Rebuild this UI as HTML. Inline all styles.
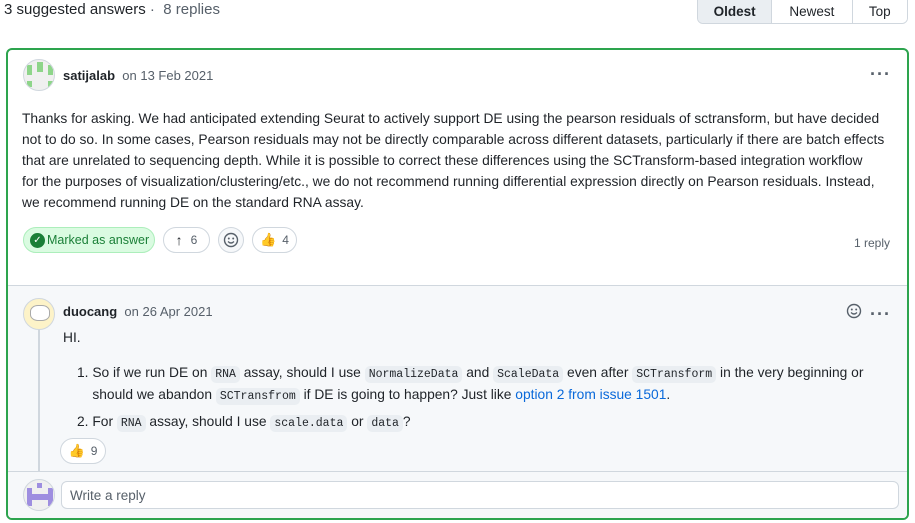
<!DOCTYPE html>
<html><head><meta charset="utf-8"><style>
*{box-sizing:border-box;margin:0;padding:0}
body{width:915px;height:523px;background:#fff;font-family:"Liberation Sans",sans-serif;color:#1f2328;font-size:13px;position:relative;overflow:hidden}
.abs{position:absolute;white-space:nowrap}
.seg{position:absolute;left:697px;top:-6px;height:30px;width:211px;border:1px solid #d0d7de;border-radius:6px;display:flex;overflow:hidden;background:#f6f8fa}
.seg div{display:flex;align-items:center;justify-content:center;border-left:1px solid #d0d7de;font-size:13.5px;padding-top:4px}
.card{position:absolute;left:6px;top:48px;width:903px;height:472px;border:2px solid #2da44e;border-radius:6px;overflow:hidden}
.av{position:absolute;border-radius:50%;border:1px solid #d0d7de;overflow:hidden}
.code{font-family:"Liberation Mono",monospace;font-size:11.5px;background:#eaeef2;border-radius:5px;padding:2px 4px}
.pill{position:absolute;height:26px;border:1px solid #d0d7de;border-radius:13px;display:flex;align-items:center;justify-content:center;font-size:12px;color:#57606a;background:#fff}
.body p{white-space:nowrap;line-height:21px;font-size:13.8px}
a{color:#0969da;text-decoration:none}
.dots{position:absolute;font-size:18px;letter-spacing:1px;color:#57606a;font-weight:bold}
</style></head><body>
<div class="abs" style="left:4px;top:1px;font-size:15px;">3 suggested answers <span style="color:#57606a">· &nbsp;8 replies</span></div>
<div class="seg"><div style="width:74px;border-left:0;background:#eaeef2;font-weight:bold">Oldest</div><div style="width:81px;background:#fff">Newest</div><div style="width:56px;background:#fff">Top</div></div>

<div class="card">
 <div class="av" style="left:15px;top:9px;width:32px;height:32px;background:#f0f0f0">
  <div style="position:absolute;left:13px;top:2px;width:6px;height:10px;background:#8ed58a"></div>
  <div style="position:absolute;left:3px;top:5px;width:5px;height:10px;background:#8ed58a"></div>
  <div style="position:absolute;left:24px;top:5px;width:5px;height:10px;background:#8ed58a"></div>
  <div style="position:absolute;left:3px;top:21px;width:5px;height:6px;background:#8ed58a"></div>
  <div style="position:absolute;left:24px;top:21px;width:5px;height:6px;background:#8ed58a"></div>
 </div>
 <div class="abs" style="left:55px;top:18px;font-size:13px"><b>satijalab</b> <span style="color:#57606a">&nbsp;on 13 Feb 2021</span></div>
 <div class="dots" style="left:862px;top:14px">···</div>
 <div class="abs body" style="left:14px;top:58px">
  <p>Thanks for asking. We had anticipated extending Seurat to actively support DE using the pearson residuals of sctransform, but have decided</p>
  <p>not to do so. In some cases, Pearson residuals may not be directly comparable across different datasets, particularly if there are batch effects</p>
  <p>that are unrelated to sequencing depth. While it is possible to correct these differences using the SCTransform-based integration workflow</p>
  <p>for the purposes of visualization/clustering/etc., we do not recommend running differential expression directly on Pearson residuals. Instead,</p>
  <p>we recommend running DE on the standard RNA assay.</p>
 </div>
 <div class="pill" style="left:15px;top:177px;width:132px;background:#dafbe1;border-color:#aceebb;color:#1a7f37;justify-content:flex-start;padding-left:6px;font-size:12.5px">
  <span style="display:inline-block;width:15px;height:15px;border-radius:50%;background:#1a7f37;color:#fff;font-size:10px;text-align:center;line-height:15px;margin-right:2px">✓</span>Marked as answer</div>
 <div class="pill" style="left:155px;top:177px;width:47px;color:#57606a"><span style="font-size:14px;margin-right:8px;color:#1f2328">↑</span>6</div>
 <div class="pill" style="left:210px;top:177px;width:26px;background:#f6f8fa">
  <svg width="16" height="16" viewBox="0 0 16 16"><circle cx="8" cy="8" r="6.5" fill="none" stroke="#57606a" stroke-width="1.4"/><circle cx="5.8" cy="6.5" r="1" fill="#57606a"/><circle cx="10.2" cy="6.5" r="1" fill="#57606a"/><path d="M5 9.5Q8 12.5 11 9.5" fill="none" stroke="#57606a" stroke-width="1.3"/></svg></div>
 <div class="pill" style="left:244px;top:177px;width:45px"><span style="font-size:13px;margin-right:6px">👍</span>4</div>
 <div class="abs" style="left:846px;top:186px;font-size:12px;color:#57606a">1 reply</div>

 <div style="position:absolute;left:0;top:235px;width:903px;height:240px;background:#f6f8fa;border-top:1px solid #d0d7de"></div>
 <div style="position:absolute;left:30px;top:270px;width:2px;height:152px;background:#d0d7de"></div>
 <div class="av" style="left:15px;top:248px;width:32px;height:32px;background:#fdf3c8"><div style="position:absolute;left:6px;top:6px;width:20px;height:16px;background:#fff;border-radius:40%;border:1px solid #aaa"></div></div>
 <div class="abs" style="left:55px;top:254px;font-size:13px"><b>duocang</b> <span style="color:#57606a">&nbsp;on 26 Apr 2021</span></div>
 <svg style="position:absolute;left:838px;top:253px" width="16" height="16" viewBox="0 0 16 16"><circle cx="8" cy="8" r="6.5" fill="none" stroke="#57606a" stroke-width="1.4"/><circle cx="5.8" cy="6.5" r="1" fill="#57606a"/><circle cx="10.2" cy="6.5" r="1" fill="#57606a"/><path d="M5 9.5Q8 12.5 11 9.5" fill="none" stroke="#57606a" stroke-width="1.3"/></svg>
 <div class="dots" style="left:862px;top:254px">···</div>
 <div class="abs" style="left:55px;top:280px;font-size:13.8px">HI.</div>
 <div class="abs body" style="left:69px;top:313px">
  <p style="line-height:20px">1. So if we run DE on <span class="code">RNA</span> assay, should I use <span class="code">NormalizeData</span> and <span class="code">ScaleData</span> even after <span class="code">SCTransform</span> in the very beginning or</p>
  <p style="line-height:20px">&nbsp;&nbsp;&nbsp;&nbsp;should we abandon <span class="code">SCTransfrom</span> if DE is going to happen? Just like <a>option 2 from issue 1501</a>.</p>
  <p style="margin-top:5px;line-height:20px">2. For <span class="code">RNA</span> assay, should I use <span class="code">scale.data</span> or <span class="code">data</span>?</p>
 </div>
 <div class="pill" style="left:52px;top:388px;width:46px"><span style="font-size:13px;margin-right:6px">👍</span>9</div>
 <div style="position:absolute;left:0;top:421px;width:903px;height:1px;background:#d0d7de"></div>
 <div class="av" style="left:15px;top:429px;width:32px;height:32px;background:#f0f0f0">
  <div style="position:absolute;left:13px;top:3px;width:5px;height:5px;background:#9e8ee0"></div>
  <div style="position:absolute;left:3px;top:8px;width:5px;height:18px;background:#9e8ee0"></div>
  <div style="position:absolute;left:24px;top:8px;width:5px;height:18px;background:#9e8ee0"></div>
  <div style="position:absolute;left:3px;top:14px;width:26px;height:6px;background:#9e8ee0"></div>
 </div>
 <div style="position:absolute;left:53px;top:431px;width:838px;height:28px;border:1px solid #d0d7de;border-radius:6px;background:#fff;padding:6px 8px;font-size:13.5px;color:#57606a">Write a reply</div>
</div>
</body></html>
